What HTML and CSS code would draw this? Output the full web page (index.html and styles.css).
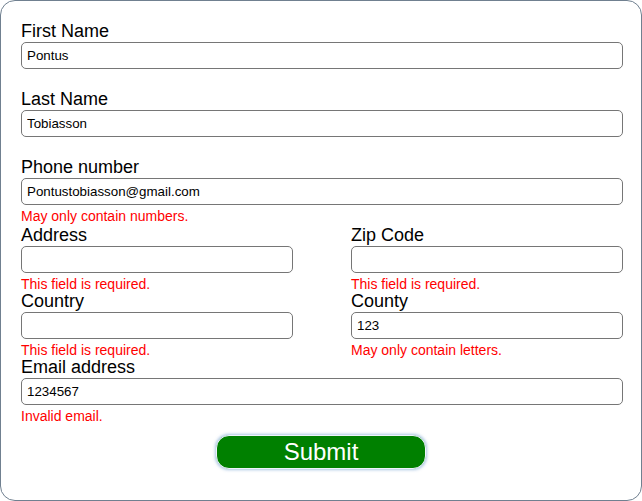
FILE: index.html
```html
<!DOCTYPE html>
<html>
<head>
<meta charset="utf-8">
<link rel="stylesheet" href="styles.css">
</head>
<body>
<form class="card">
  <div class="field wide">
    <label class="label">First Name</label>
    <input class="input" type="text" value="Pontus">
    <span class="error"></span>
  </div>
  <div class="field wide">
    <label class="label">Last Name</label>
    <input class="input" type="text" value="Tobiasson">
    <span class="error"></span>
  </div>
  <div class="field wide">
    <label class="label">Phone number</label>
    <input class="input" type="text" value="Pontustobiasson@gmail.com">
    <span class="error">May only contain numbers.</span>
  </div>
  <div class="grid">
    <div class="field">
      <label class="label">Address</label>
      <input class="input" type="text" value="">
      <span class="error">This field is required.</span>
    </div>
    <div class="field">
      <label class="label">Zip Code</label>
      <input class="input" type="text" value="">
      <span class="error">This field is required.</span>
    </div>
    <div class="field">
      <label class="label">Country</label>
      <input class="input" type="text" value="">
      <span class="error">This field is required.</span>
    </div>
    <div class="field">
      <label class="label">County</label>
      <input class="input" type="text" value="123">
      <span class="error">May only contain letters.</span>
    </div>
  </div>
  <div class="field">
    <label class="label">Email address</label>
    <input class="input" type="text" value="1234567">
    <span class="error">Invalid email.</span>
  </div>
  <div class="actions">
    <button class="submit" type="button">Submit</button>
  </div>
</form>
</body>
</html>
```
FILE: styles.css
```css
html, body {
  margin: 0;
  padding: 0;
  background: #ffffff;
}
body {
  font-family: "Liberation Sans", Arial, sans-serif;
}
.card {
  box-sizing: border-box;
  width: 642px;
  height: 501px;
  border: 1px solid #708090;
  border-radius: 15px;
  padding: 20px 18px 0 20px;
  display: flex;
  flex-direction: column;
}
.field {
  display: flex;
  flex-direction: column;
}
.field.wide {
  margin-bottom: 2px;
}
.label {
  font-size: 18px;
  line-height: 21px;
  color: #000;
}
.input {
  box-sizing: border-box;
  width: 100%;
  height: 27px;
  margin: 0;
  border: 1px solid #767676;
  border-radius: 5px;
  padding: 0 5px;
  font-family: "Liberation Sans", Arial, sans-serif;
  font-size: 13.33px;
  color: #000;
  background: #fff;
  outline: none;
}
.error {
  display: block;
  height: 15px;
  padding-top: 3px;
  font-size: 14px;
  line-height: 16px;
  color: #ff0000;
}
.grid {
  display: grid;
  grid-template-columns: 272px 272px;
  column-gap: 58px;
}
.actions {
  display: flex;
  justify-content: center;
  margin-top: 12px;
  padding-right: 2px;
}
.submit {
  box-sizing: border-box;
  width: 210px;
  height: 34px;
  background: #008000;
  color: #fff;
  border: 1px solid #eef4fb;
  border-radius: 13px;
  box-shadow: 0 0 3px 1px rgba(100, 149, 200, 0.55);
  font-family: "Liberation Sans", Arial, sans-serif;
  font-size: 24px;
  line-height: 30px;
  padding: 0;
  cursor: pointer;
}
```
